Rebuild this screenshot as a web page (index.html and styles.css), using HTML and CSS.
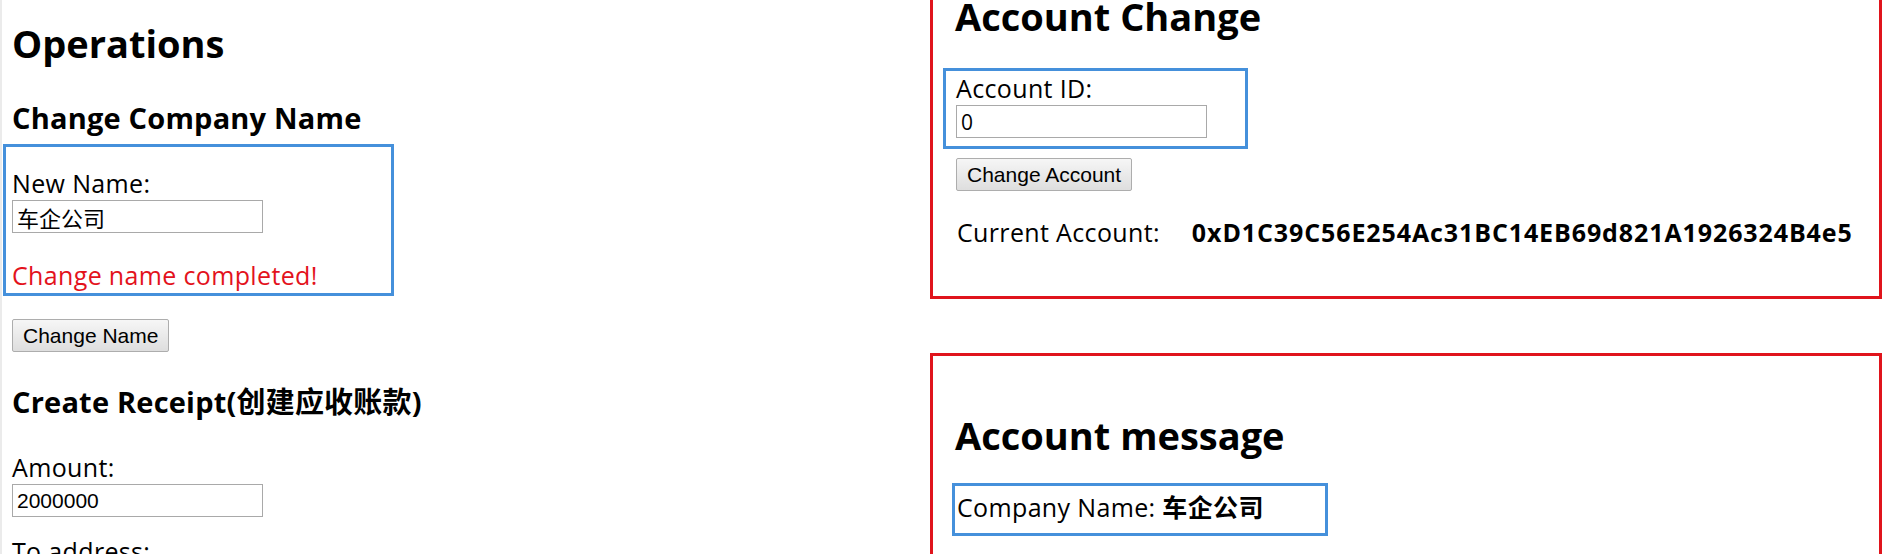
FILE: index.html
```html
<!DOCTYPE html>
<html lang="en">
<head>
<meta charset="utf-8">
<title>Operations</title>
<link rel="stylesheet" href="styles.css">
</head>
<body>
<div class="page">
  <div class="left-col">
    <h1 class="title">Operations</h1>
    <h3 class="subtitle">Change Company Name</h3>
    <div class="blue-box name-box">
      <label class="field-label">New Name:</label>
      <input class="text-input cjk-input" type="text" value="车企公司">
      <p class="status">Change name completed!</p>
    </div>
    <button class="btn btn-name" type="button">Change Name</button>
    <h3 class="subtitle receipt-title">Create Receipt(创建应收账款)</h3>
    <label class="field-label amount-label">Amount:</label>
    <input class="text-input" type="text" value="2000000">
    <label class="field-label address-label">To address:</label>
    <input class="text-input" type="text" value="">
  </div>
  <div class="right-col">
    <div class="red-box account-change">
      <h1 class="title box-title">Account Change</h1>
      <div class="blue-box id-box">
        <label class="field-label">Account ID:</label>
        <input class="text-input id-input" type="text" value="0">
      </div>
      <button class="btn btn-account" type="button">Change Account</button>
      <div class="current-row">
        <span class="current-label">Current Account:</span>
        <strong class="current-addr">0xD1C39C56E254Ac31BC14EB69d821A1926324B4e5</strong>
      </div>
    </div>
    <div class="red-box account-message">
      <h1 class="title box-title">Account message</h1>
      <div class="blue-box company-box">Company Name: <strong class="company-name">车企公司</strong></div>
    </div>
  </div>
</div>
</body>
</html>
```

FILE: styles.css
```css
html, body {
  margin: 0;
  padding: 0;
  overflow: hidden;
  background: #ffffff;
}

body {
  border-left: 2px solid #ebebeb;
  font-family: "Open Sans", "Noto Sans CJK SC", sans-serif;
  font-size: 25px;
  line-height: 34px;
  letter-spacing: 0.35px;
  color: #000000;
  height: 554px;
}

.page {
  display: flex;
  align-items: flex-start;
}

.left-col {
  width: 918px;
  flex: none;
  padding: 20px 0 0 10px;
  display: flex;
  flex-direction: column;
  align-items: flex-start;
}

.right-col {
  width: 952px;
  flex: none;
  display: flex;
  flex-direction: column;
}

.title {
  margin: 0;
  font-size: 38px;
  line-height: 46px;
  font-weight: 700;
  letter-spacing: 0;
}

.subtitle {
  margin: 34px 0 0 0;
  font-size: 29px;
  line-height: 36px;
  font-weight: 700;
  letter-spacing: 0.2px;
}

.receipt-title {
  margin-top: 32px;
}

.blue-box {
  border: 3px solid #4590db;
  box-sizing: border-box;
}

.name-box {
  margin: 8px 0 0 -9px;
  width: 391px;
  padding: 19px 0 1px 6px;
}

.field-label {
  display: block;
}

.amount-label {
  margin-top: 30px;
}

.address-label {
  margin-top: 17px;
}

.text-input {
  display: block;
  box-sizing: border-box;
  width: 251px;
  height: 33px;
  margin: 0;
  padding: 1px 4px;
  border: 1px solid #a9a9a9;
  font-family: "Liberation Sans", "Noto Sans CJK SC", sans-serif;
  font-size: 21px;
  letter-spacing: 0;
  color: #000;
  background: #fff;
}

.cjk-input {
  font-family: "Noto Sans CJK SC", sans-serif;
  font-size: 22px;
}

.id-input {
  font-family: "Open Sans", sans-serif;
}

.status {
  margin: 25px 0 0 0;
  color: #e3121c;
}

.btn {
  font-family: "Liberation Sans", sans-serif;
  font-size: 21px;
  line-height: 25px;
  letter-spacing: 0;
  padding: 3px 10px;
  border: 1px solid #adadad;
  border-radius: 2px;
  background: linear-gradient(#f6f6f6, #dedede);
  color: #000;
}

.btn-name {
  margin-top: 23px;
}

.red-box {
  border: 3px solid #e0141c;
  box-sizing: border-box;
  width: 952px;
}

.account-change {
  margin-top: -20px;
  padding: 18px 0 47px 10px;
  display: flex;
  flex-direction: column;
  align-items: flex-start;
}

.box-title {
  margin-left: 12px;
}

.account-change .box-title {
  line-height: 30px;
  margin-bottom: 37px;
}

.id-box {
  width: 305px;
  padding: 0 10px 8px 10px;
}

.btn-account {
  margin: 9px 0 0 13px;
}

.current-row {
  margin-top: 24px;
  padding-left: 14px;
  display: flex;
  gap: 32px;
}

.current-addr {
  font-weight: 700;
  letter-spacing: 0.9px;
}

.account-message {
  margin-top: 54px;
  padding: 56px 0 0 10px;
  min-height: 300px;
}

.account-message .box-title {
  margin-bottom: 25px;
}

.company-box {
  width: 376px;
  margin-left: 9px;
  padding: 4px 0 9px 2px;
}

.company-name {
  font-weight: 700;
}
```
